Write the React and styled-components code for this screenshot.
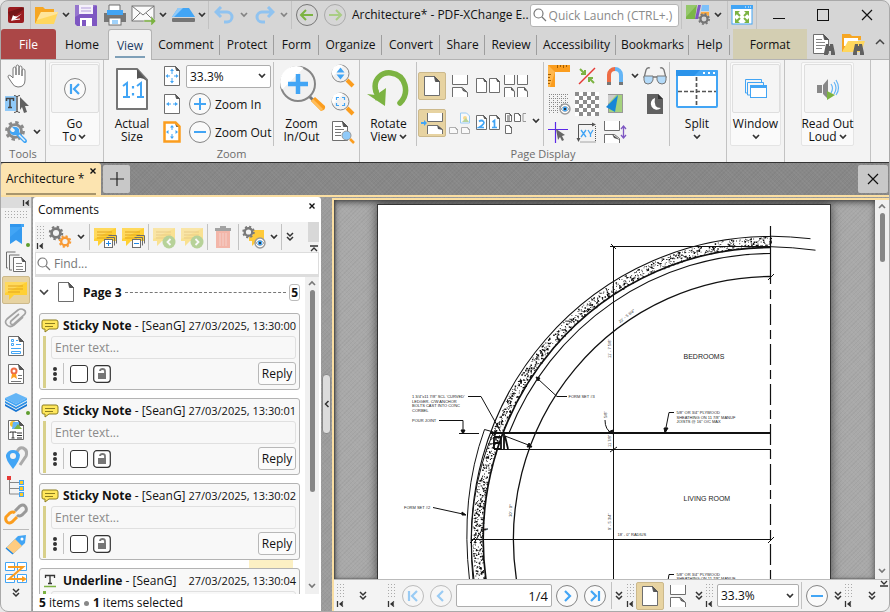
import React from "react";
import styled, { createGlobalStyle, css } from "styled-components";

const GlobalStyle = createGlobalStyle`
  * {
    box-sizing: border-box;
  }
  body {
    margin: 0;
    background: #e9e9e9;
    font-family: "Open Sans", "Noto Sans", sans-serif;
    font-size: 12px;
    line-height: 13px;
    color: #111;
  }
  button,
  input,
  select {
    font: inherit;
    color: inherit;
    margin: 0;
  }
`;

const weave = css`
  background-image: repeating-linear-gradient(
      45deg,
      rgba(255, 255, 255, 0.04) 0 1px,
      transparent 1px 3px
    ),
    repeating-linear-gradient(
      -45deg,
      rgba(0, 0, 0, 0.04) 0 1px,
      transparent 1px 3px
    );
`;

/* ---------- icons ---------- */

const G = "#6e6e6e";
const B = "#42a5f5";
const GREEN = "#7cb342";
const sheet = (x, y, w, h, f = 5) => (
  <>
    <path
      d={`M${x} ${y}h${w - f}l${f} ${f}v${h - f}h${-w}z`}
      fill="#fff"
      stroke={G}
    />
    <path d={`M${x + w - f} ${y}l${f} ${f}h${1 - f}z`} fill="#555" stroke="#555" />
  </>
);
const lens = (cx, cy, r, w) => (
  <>
    <circle cx={cx} cy={cy} r={r} fill="#f1f1f1" stroke="#858585" strokeWidth={w} />
    <path
      d={`M${cx - r + 1} ${cy + r / 3}L${cx + r / 3} ${cy - r + 1}A${r - 1} ${r - 1} 0 0 0 ${cx - r + 1} ${cy + r / 3}`}
      fill="#fff"
    />
  </>
);
const gear = (cx, cy, r, color) => (
  <>
    <circle cx={cx} cy={cy} r={r} fill="none" stroke={color} strokeWidth={r * 0.62} />
    <circle
      cx={cx}
      cy={cy}
      r={r * 1.42}
      fill="none"
      stroke={color}
      strokeWidth={r * 0.46}
      strokeDasharray={`${r * 0.557} ${r * 0.557}`}
    />
  </>
);
const note = (
  <>
    <path d="M1 3h22v13H10l-5 5v-5H1z" fill="#ffd034" />
    <path d="M1 3h22L1 14z" fill="#fff" opacity=".2" />
    <path d="M4 7h15M4 10h15M4 13h12" stroke="#e2a51f" />
  </>
);
const eye = (cx, cy) => (
  <>
    <circle cx={cx} cy={cy} r="5" fill="#fff" stroke="#999" strokeWidth="1.4" />
    <path d={`M${cx - 4} ${cy}q4 -5 8 0q-4 5 -8 0`} fill="#fff" stroke="#777" strokeWidth=".6" />
    <circle cx={cx} cy={cy} r="2.4" fill={B} />
    <circle cx={cx} cy={cy} r="1.1" fill="#222" />
  </>
);
const binoculars = (x, y) => (
  <path
    d={`M${x + 2} ${y}h3v2h1v-2h3l2 9v2h-4v-4h-3v4h-4v-2z`}
    fill="#616161"
  />
);
const stack = (x, y, sign) => (
  <>
    <path d={`M${x + 4} ${y}h8v8M${x + 2} ${y + 2}h8v8`} fill="none" stroke={G} />
    <rect x={x} y={y + 4} width="8" height="8" fill="#fff" stroke={G} />
    <path d={sign === "+" ? `M${x + 1.5} ${y + 8}h5M${x + 4} ${y + 5.5}v5` : `M${x + 1.5} ${y + 8}h5`} stroke="#1e88e5" />
  </>
);

const shapes = {
  chevron: [8, 8, <path d="M1 2l3 3 3-3" fill="none" stroke="#333" strokeWidth="1.7" />],
  chevronUp: [10, 8, <path d="M1 6l4-4 4 4" fill="none" stroke="#444" strokeWidth="1.5" />],
  chevronBig: [10, 8, <path d="M1 2l4 4 4-4" fill="none" stroke="#444" strokeWidth="1.7" />],
  scrollUp: [10, 8, <path d="M2 6l3-3 3 3" fill="none" stroke="#777" strokeWidth="1.6" />],
  scrollDown: [10, 8, <path d="M2 2l3 3 3-3" fill="none" stroke="#777" strokeWidth="1.6" />],
  chevronLeft: [6, 8, <path d="M4.500 1L1.500 4l3 3" fill="none" stroke="#333" strokeWidth="1.500" />],
  more: [8, 10, <path d="M1 1l3 3 3-3M1 5l3 3 3-3" fill="none" stroke="#333" strokeWidth="1.5" />],
  logo: [16, 16, (
    <>
      <rect width="16" height="16" rx="2" fill="#9a1c20" />
      <path d="M0 5L16 0V2L3 12z" fill="#5d1013" opacity=".6" />
      <path d="M14 3L6 9l3 .5 5-3-6 5-5 2.500L5 8l1 1z" fill="#fff" />
      <path d="M4 13l8-1" stroke="#fff" />
    </>
  )],
  folder: [24, 18, (
    <>
      <path d="M1 1h8l2 2h9v4H8L2 17H1z" fill="#f6a623" />
      <path d="M7 6h17l-4 12H1z" fill="#ffd75e" />
      <path d="M7 6h17l-1 2L3 14z" fill="#ffe59a" />
    </>
  )],
  save: [22, 22, (
    <>
      <path d="M0 1h21l1 1v20H2l-2-2z" fill="#7e57c2" />
      <path d="M0 1h22L0 13z" fill="#9575cd" />
      <rect x="4" y="1" width="14" height="9" fill="#f5f0fb" />
      <path d="M6 4h10M6 7h10" stroke="#b39ddb" />
      <rect x="5" y="14" width="12" height="8" fill="#fff" />
      <rect x="7" y="16" width="4" height="6" fill="#7e57c2" />
    </>
  )],
  printer: [22, 22, (
    <>
      <path d="M5 1h11v7H5z" fill="#fff" stroke={G} />
      <rect x="0" y="9" width="22" height="9" fill="#777" />
      <path d="M3 6h16v5H3z" fill={B} />
      <rect x="5" y="14" width="12" height="7" fill="#fff" stroke={G} />
      <path d="M8 17h6M8 19h6" stroke={B} />
    </>
  )],
  mail: [25, 20, (
    <>
      <rect x="1" y="1" width="22" height="15" fill="#fafafa" stroke="#777" />
      <path d="M1 1l11 9L23 1M1 16l8-8M23 16l-8-8" fill="none" stroke="#777" />
      <path d="M13 15h7v-4l5 5-5 5v-4h-7z" fill={GREEN} stroke="#d6d6d6" strokeWidth=".5" />
    </>
  )],
  scanner: [25, 16, (
    <>
      <path d="M7 1h11l6 9H1z" fill={B} />
      <path d="M7 1h5l-9 9H1z" fill="#90caf9" />
      <rect x="1" y="11" width="23" height="4" rx="1" fill="#757575" />
    </>
  )],
  undo: [22, 18, <path d="M7 1L2 6l5 5M2 6h11a5 5 0 0 1 0 10h-3" fill="none" stroke="#90c3f0" strokeWidth="3" />],
  redo: [22, 18, <path d="M15 1l5 5-5 5M20 6H9a5 5 0 0 0 0 10h3" fill="none" stroke="#90c3f0" strokeWidth="3" />],
  back: [24, 24, (
    <>
      <circle cx="12" cy="12" r="10.500" fill="none" stroke="#777" />
      <path d="M18 12H7M11 7l-5 5 5 5" fill="none" stroke={GREEN} strokeWidth="2" />
    </>
  )],
  forward: [24, 24, (
    <>
      <circle cx="12" cy="12" r="10.500" fill="none" stroke="#aaa" />
      <path d="M6 12h11M13 7l5 5-5 5" fill="none" stroke="#a9cd84" strokeWidth="2" />
    </>
  )],
  search: [14, 14, <path d="M9 9l4 4M10 5.500a4.500 4.500 0 1 1-9 0a4.500 4.500 0 0 1 9 0" fill="none" stroke="#777" strokeWidth="1.200" />],
  theme: [25, 22, (
    <>
      <path d="M0 1h11L9 15H0z" fill="#7bb648" />
      <path d="M0 1h11L0 13z" fill="#95c86b" />
      <path d="M12 1h3l-3 14H9z" fill="#7e57c2" />
      <path d="M16 1h7v6h-8z" fill="#7cc0fa" />
      <path d="M15 8h8v5l-9-1z" fill="#ffab40" />
      <circle cx="18" cy="15" r="5" fill="#d6d6d6" />
      {gear(18, 15, 3.6, "#757575")}
    </>
  )],
  fullscreen: [22, 20, (
    <>
      <rect x="1" y="1" width="20" height="18" fill="#fff" stroke={B} />
      <rect width="22" height="4" fill={B} />
      <path d="M14 2h1M17 2h1M19 2h1" stroke="#fff" />
      <path d="M4 6h5L4 11zM18 6h-5l5 5zM4 18h5l-5-5zM18 18h-5l5-5z" fill={GREEN} />
      <path d="M5 7l4 4M17 7l-4 4M5 17l4-4M17 17l-4-4" stroke={GREEN} strokeWidth="2" />
    </>
  )],
  minimize: [12, 12, <path d="M0 9.500h12" stroke="#111" />],
  maximize: [12, 12, <rect x=".5" y=".5" width="11" height="11" fill="none" stroke="#111" />],
  close: [12, 12, <path d="M1 1l10 10M11 1L1 11" stroke="#111" strokeWidth="1.200" />],
  closeSmall: [8, 8, <path d="M1.500 1.500l5 5M6.500 1.500l-5 5" stroke="#111" strokeWidth="1.400" />],
  plus: [16, 16, <path d="M8 1v14M1 8h14" stroke="#222" strokeWidth="1.200" />],
  findDoc: [24, 22, (
    <>
      {sheet(1.500, 1.500, 15, 19)}
      <path d="M4 6.500h6M4 9.500h9M4 12.500h9M4 15.500h6" stroke="#888" />
      {binoculars(12, 11)}
    </>
  )],
  findFolder: [24, 22, (
    <>
      <path d="M1 1h8l2 2h9v4H8L2 19H1z" fill="#f6a623" />
      <path d="M3 5h14v8H3z" fill="#fff" />
      <path d="M7 8h17l-4 11H1z" fill="#ffd75e" />
      {binoculars(12, 11)}
    </>
  )],
  hand: [20, 24, (
    <path
      d="M6 14V5q0-2 1.500-2T9 5v6V3q0-2 1.500-2T12 3v8V4q0-2 1.500-2T15 4v8V7q0-2 1.500-2T18 7v9q0 7-7 7-4 0-6-4l-4-6q0-3 3-1z"
      fill="#fff"
      stroke="#777"
    />
  )],
  selectText: [25, 22, (
    <>
      <rect x="0" y="3" width="11" height="15" fill="#90caf9" />
      <path d="M1.500 8V5.500h7V8M5 5.500v9M3 14.500h4" stroke="#444" fill="none" strokeWidth="1.500" />
      <path d="M9 2.500q3 0 3 2v13q0 2-3 2M15 2.500q-3 0-3 2v13q0 2 3 2" fill="none" stroke="#555" />
      <path d="M15 4l9 9h-4l2 6-3 1-2-6-2 3z" fill="#616161" />
    </>
  )],
  gearWrench: [23, 23, (
    <>
      {gear(10, 10, 6, "#8a8a8a")}
      <circle cx="10" cy="10" r="5" fill="#f3f3f3" />
      <path d="M13 13l7 7" stroke={B} strokeWidth="4" strokeLinecap="round" />
      <path d="M7 6l3 3-1 2-2 0-2-2q-1 4 3 5 3 1 5-1t1-5q-2-3-7-2" fill={B} />
      <path d="M14 14l6 6" stroke="#e3f2fd" strokeWidth="1.500" />
    </>
  )],
  first: [24, 24, (
    <>
      <circle cx="12" cy="12" r="10.500" fill="#fafafa" stroke="#858585" />
      <path d="M8 7v10M16 7l-5 5 5 5" fill="none" stroke={B} strokeWidth="2.200" />
    </>
  )],
  prev: [24, 24, (
    <>
      <circle cx="12" cy="12" r="10.500" fill="#fafafa" stroke="#858585" />
      <path d="M14 7l-5 5 5 5" fill="none" stroke={B} strokeWidth="2.200" />
    </>
  )],
  next: [24, 24, (
    <>
      <circle cx="12" cy="12" r="10.500" fill="#fafafa" stroke="#858585" />
      <path d="M10 7l5 5-5 5" fill="none" stroke={B} strokeWidth="2.200" />
    </>
  )],
  last: [24, 24, (
    <>
      <circle cx="12" cy="12" r="10.500" fill="#fafafa" stroke="#858585" />
      <path d="M16 7v10M8 7l5 5-5 5" fill="none" stroke={B} strokeWidth="2.200" />
    </>
  )],
  zoomIn: [24, 24, (
    <>
      <circle cx="12" cy="12" r="10.500" fill="#fafafa" stroke="#858585" />
      <path d="M6 12h12M12 6v12" stroke={B} strokeWidth="2" />
    </>
  )],
  zoomOut: [24, 24, (
    <>
      <circle cx="12" cy="12" r="10.500" fill="#fafafa" stroke="#858585" />
      <path d="M6 12h12" stroke={B} strokeWidth="2" />
    </>
  )],
  actual: [36, 44, (
    <>
      <path d="M3 2h20l10 11v29H3z" fill="#fff" stroke="#757575" strokeWidth="2" strokeLinejoin="round" />
      <path d="M23 2l10 12q-6-5-10-2z" fill="#555" />
      <path d="M9 19l4-3v14M9 30h7M23 19l4-3v14M23 30h7" fill="none" stroke={B} strokeWidth="2" />
      <path d="M19 19v2.500M19 26v2.500" stroke={B} strokeWidth="2.200" />
    </>
  )],
  fitPage: [18, 22, (
    <>
      {sheet(1.5, 1.5, 15, 19, 4)}
      <path d="M9 3.500l2 2.500H7zM9 18.500l2-2.500H7zM2.500 11l2.500-2v4zM15.500 11L13 9v4z" fill={B} />
      <path d="M9 6v3M9 13v3M5 11h2M11 11h2" stroke={B} />
    </>
  )],
  fitWidth: [18, 22, (
    <>
      {sheet(1.5, 1.5, 15, 19, 4)}
      <path d="M3 11l3-2v4zM15 11l-3-2v4z" fill={B} />
      <path d="M6 11h2M10 11h2" stroke={B} />
    </>
  )],
  fitVisible: [18, 22, (
    <>
      {sheet(1.500, 1.5, 15, 19, 4)}
      <path d="M1.500 1.500h11l4 4v15h-15z" fill="none" stroke="#fb9d1e" strokeWidth="2.500" />
      <path d="M9 4l2 2.500H7zM9 18l2-2.500H7zM3 11l2.500-2v4zM15 11l-2.500-2v4z" fill={B} />
      <path d="M9 6v3M9 13v3" stroke={B} />
    </>
  )],
  magnifier: [48, 48, (
    <>
      <path d="M31 31l5 5" stroke="#777" strokeWidth="3" />
      <path d="M33 36l4-4 10 9q1 4-4 5z" fill="#fb9d1e" />
      <path d="M33 36l2-2 10 10-2 2z" fill="#ffbd59" />
      {lens(20, 19, 17, 2)}
      <path d="M20 9v20M10 19h20" stroke={B} strokeWidth="4.500" />
    </>
  )],
  zoomDynamic: [24, 24, (
    <>
      <path d="M16 16l6 6" stroke="#fb9d1e" strokeWidth="4" />
      {lens(9.500, 9.500, 8.500, 1)}
      <path d="M9.500 3.500l4 5h-8zM9.500 15.500l4-5h-8z" fill={B} />
    </>
  )],
  zoomArea: [24, 24, (
    <>
      <path d="M16 16l6 6" stroke="#fb9d1e" strokeWidth="4" />
      {lens(9.500, 9.500, 8.500, 1)}
      <path d="M5.500 8V5.500H8M11 5.500h2.500V8M5.500 11v2.500H8M11 13.500h2.500V11" fill="none" stroke={B} strokeWidth="1.200" />
    </>
  )],
  zoomLoupe: [24, 24, (
    <>
      {sheet(1.500, 1.500, 15, 19)}
      <path d="M4 6.500h6M4 9.500h9M4 12.500h6M4 15.500h6" stroke="#777" />
      <path d="M19 19l4 4" stroke="#fb9d1e" strokeWidth="2.500" />
      <circle cx="15.500" cy="15.500" r="4.500" fill="#90caf9" stroke="#999" />
    </>
  )],
  rotate: [46, 38, (
    <>
      <path d="M10 22C6 8 17 2 25 3c15 2 19 20 9 30" fill="none" stroke={GREEN} strokeWidth="5.500" strokeLinecap="round" />
      <path d="M1 24l9 1 10-7-1 18z" fill={GREEN} />
      <path d="M10 20l2 10" stroke={GREEN} strokeWidth="5" />
    </>
  )],
  pageSingle: [18, 22, sheet(1.500, 1.500, 15, 19)],
  pageCont: [18, 22, (
    <>
      <path d="M1.500 0v9.500h15V0" fill="#fff" stroke={G} />
      <path d="M1.500 22V12.500h10l5 5V22" fill="#fff" stroke={G} />
      <path d="M10 12l7 6-5-2z" fill="#555" />
    </>
  )],
  pageTwo: [26, 18, (
    <>
      {sheet(1.500, 1.500, 10, 14, 3)}
      {sheet(14.500, 1.500, 10, 14, 3)}
    </>
  )],
  pageFour: [26, 22, (
    <>
      <path d="M1.500 0v9.500h10V0M14.500 0v9.500h10V0M1.500 22v-9.500h7l3 4V22M14.500 22v-9.500h7l3 4V22" fill="#fff" stroke={G} />
      <path d="M8 12l4 5-4-2zM21 12l4 5-4-2z" fill="#555" />
    </>
  )],
  pageLoop: [24, 22, (
    <>
      <path d="M7.500 1v8.500h15V1M7.500 22v-8.500h10l5 4V22" fill="#fff" stroke={G} />
      <path d="M17 13l6 5-5-1z" fill="#555" />
      <path d="M1 11h3" stroke={B} strokeWidth="2" />
      <path d="M4 8l3 3-3 3z" fill={B} />
    </>
  )],
  pageCover: [24, 22, (
    <g opacity=".5">
      <path d="M12.500 1h6l3 3v7h-9z" fill="#fff" stroke={B} />
      <circle cx="17" cy="6" r="2" fill="#fbc02d" />
      <path d="M14 10l4-4 3 4z" fill={GREEN} />
      {sheet(1.500, 15.500, 8, 6, 2)}
      {sheet(13.500, 15.500, 8, 6, 2)}
    </g>
  )],
  pageRtl: [26, 18, (
    <>
      {sheet(1.500, 1.500, 10, 14, 3)}
      {sheet(14.500, 1.500, 10, 14, 3)}
      <path d="M4 7.500q2.500-2 4.500 0T4 13.500h5M17.500 8l2-1.500v7M17 13.500h5" fill="none" stroke={B} strokeWidth="1.700" />
    </>
  )],
  pageThumbs: [24, 22, (
    <>
      {sheet(1.500, 1.500, 6, 8, 2)}
      <path d="M3 4h3M3 6h3M3 8h3" stroke="#555" />
      {sheet(10.500, 1.500, 6, 8, 2)}
      <path d="M22 1.500h-3v8h3" fill="none" stroke="#999" />
      {sheet(1.500, 13.500, 6, 8, 2)}
    </>
  )],
  ruler: [24, 24, (
    <>
      <path d="M1 1h22v7H8v15H1z" fill="#fb9d1e" />
      <path d="M8 8L1 1v22h2z" fill="#ffb74d" />
      <path d="M10.500 1v3M13.500 1v2M16.500 1v3M19.500 1v2M1 10.500h3M1 13.500h2M1 16.500h3M1 19.500h2" stroke="#a35e00" />
    </>
  )],
  snapLine: [24, 24, (
    <>
      <path d="M4 20L20 4" stroke="#e53935" strokeWidth="1.500" />
      <path d="M5 5l5 5M10 6v4H6M19 19l-5-5M14 18v-4h4" fill="none" stroke={GREEN} strokeWidth="2" />
    </>
  )],
  magnet: [20, 22, (
    <>
      <path d="M4 19V10a6 6 0 0 1 6-6" fill="none" stroke="#ee6c45" strokeWidth="4" />
      <path d="M10 4a6 6 0 0 1 6 6v9" fill="none" stroke="#64b5f6" strokeWidth="4" />
      <path d="M2 18.500h4M14 18.500h4" stroke="#777" strokeWidth="3" />
    </>
  )],
  glasses: [26, 20, (
    <>
      <path d="M2 12L4 4q1-3 4-2M24 12L22 4q-1-3-4-2M11 11h4" fill="none" stroke="#777" strokeWidth="1.300" />
      <path d="M2 10h9v4q-1 4-5 4t-4-4zM15 10h9v4q0 4-4 4t-5-4z" fill="#b3daf9" stroke="#777" />
    </>
  )],
  gridEye: [24, 24, (
    <>
      <path d="M2 2.500h19M2 6.500h19M2 10.500h19M2 14.500h19M2 18.500h10M2.500 2v19M6.500 2v19M10.500 2v19M14.500 2v12M18.500 2v10" stroke="#888" strokeDasharray="1 1" />
      {eye(18, 17)}
    </>
  )],
  checker: [24, 24, (
    <>
      <rect width="24" height="24" fill="#fff" />
      <path
        d="M0 2h24M0 10h24M0 18h24"
        stroke="#8c8c8c"
        strokeWidth="4"
        strokeDasharray="4 4"
      />
      <path
        d="M4 6h20M4 14h20M4 22h20"
        stroke="#8c8c8c"
        strokeWidth="4"
        strokeDasharray="4 4"
      />
    </>
  )],
  openPage: [20, 22, (
    <>
      <rect x="3.500" y="1.500" width="14" height="18" fill="#a5d27e" stroke="#999" />
      <path d="M13 2L1 14l9 5z" fill="#1787d8" />
      <path d="M3 2h8l-8 9z" fill="#ccc" />
    </>
  )],
  moon: [18, 22, (
    <>
      <path d="M1 1h11l5 5v15H1z" fill="#616161" />
      <path d="M12 1l5 5h-5z" fill="#333" />
      <path d="M9 5a6 6 0 1 0 6 10q-8 0-6-10" fill="#fff" />
    </>
  )],
  cross: [24, 24, (
    <>
      <path d="M1 9.500h20M8.500 2v21" stroke="#5b28e8" strokeWidth="1.200" />
      <path d="M9 9l9 6-3 1 2 4-2 1-2-4-2 3z" fill="#666" />
    </>
  )],
  xy: [24, 24, (
    <>
      <path d="M3.500 20V4.500h14" fill="none" stroke="#555" />
      <path d="M3.500 22l-2-4h4zM21 4.500l-4-2v4z" fill="#555" />
      <path d="M20.500 6v16H5" fill="none" stroke="#555" strokeDasharray="1 1" />
      <path d="M6 10l5 7M11 10l-5 7M13 10l2.500 4L18 10M15.500 14v3" fill="none" stroke={B} strokeWidth="1.300" />
    </>
  )],
  spacing: [24, 24, (
    <>
      <path d="M1.500 1v9.500h15V1M1.500 23v-8.500h10l5 4V23" fill="#fff" stroke={G} />
      <path d="M9 14l8 6-6-2z" fill="#555" />
      <path d="M20.500 7v10M18 9l2.500-3L23 9M18 15l2.500 3 2.500-3" fill="none" stroke="#7e57c2" strokeWidth="1.300" />
    </>
  )],
  split: [42, 38, (
    <>
      <rect x="1" y="1" width="40" height="36" rx="1" fill="#fff" stroke={B} strokeWidth="2" />
      <path d="M0 1q0-1 1-1h40q1 0 1 1v5H0z" fill={B} />
      <path d="M0 0h24l-6 6H0z" fill="#2b93ea" />
      <path d="M27 3h2M32 3h2M37 3h2" stroke="#fff" strokeWidth="2" />
      <path d="M20.500 7v29M2 21.500h38" stroke="#555" strokeWidth="1.700" strokeDasharray="4 2" />
    </>
  )],
  windows: [24, 22, (
    <>
      <path d="M3 15H1.500V1.500h16V4M6 17H3.500V4.500h16V7" fill="none" stroke={B} />
      <rect x="6.500" y="7.500" width="16" height="12" fill="#fff" stroke={B} />
      <path d="M6 7h17v3H6z" fill={B} />
    </>
  )],
  speaker: [24, 24, (
    <>
      <path d="M1 8h5v8H1zM7 8l5-6v20l-5-5z" fill="#888" />
      <path d="M15 7q3 4 0 9M18 5q4 6 0 12M20 3q5 8 0 15" fill="none" stroke="#64b5f6" strokeWidth="1.200" />
      <path d="M11 14l8 4-8 5z" fill={GREEN} />
    </>
  )],
  dock: [8, 8, <path d="M1.500 1v6M7 1.500L4 4l3 2.500M4 4h3" fill="none" stroke="#333" strokeWidth="1.300" />],
  collapse: [8, 7, <path d="M0 1h8M1 6l3-3 3 3" fill="none" stroke="#333" strokeWidth="1.300" />],
  expand: [8, 7, <path d="M0 6h8M1 1l3 3 3-3" fill="none" stroke="#333" strokeWidth="1.300" />],
  bookmark: [18, 22, (
    <>
      <path d="M3 1h14v3h-2v17l-6-4-6 4z" fill={B} />
      <path d="M3 1h11v3H3z" fill="#1e88e5" opacity=".5" />
      <path d="M3 14L15 4v17l-6-4-6 4z" fill="#1e88e5" opacity=".35" />
    </>
  )],
  pages: [22, 22, (
    <>
      <path d="M3 17H1.500v-16h9M7 19H4.500V4h10" fill="none" stroke={G} />
      {sheet(8.500, 6.500, 12, 14, 4)}
      <path d="M11 12.500h6M11 15.500h7M11 18.500h7" stroke="#888" />
    </>
  )],
  note: [24, 22, note],
  clip: [24, 22, <path d="M19 10l-9 8q-4 3-7 0t0-6L14 3q3-2 6 0t0 5l-10 9q-2 1-3 0t0-3l8-7" fill="none" stroke="#a3a3a3" strokeWidth="1.700" />],
  fields: [18, 22, (
    <>
      {sheet(1.500, 1.500, 15, 19)}
      <path d="M4.500 4.500h2v2h-2zM4.500 8.500h2v2h-2zM4.500 16.500h9v2h-9z" fill="none" stroke={B} />
      <path d="M9 5.500h2M9 9.500h5M4 13.500h10" stroke={B} />
    </>
  )],
  cert: [18, 22, (
    <>
      {sheet(1.500, 1.500, 15, 19)}
      <circle cx="7" cy="8" r="2.500" fill="none" stroke="#ee6c45" strokeWidth="2" />
      <path d="M5 11l-1 5 3-2 3 2-1-5" fill="#fb9d1e" />
      <path d="M11 12.500h4M11 15.500h4M4 18.500h10" stroke="#777" />
    </>
  )],
  layers: [24, 22, (
    <>
      <path d="M1 13l11 6 11-6v2l-11 6-11-6z" fill="#1976d2" />
      <path d="M1 10l11 6 11-6v2l-11 6-11-6z" fill="#2b8fe6" />
      <path d="M1 7l11-5 11 5-11 6z" fill="#64b5f6" />
      <path d="M1 7l11 6 11-6v2l-11 6-11-6z" fill="#42a5f5" />
    </>
  )],
  content: [18, 22, (
    <>
      {sheet(1.500, 1.500, 15, 19)}
      <circle cx="6" cy="5" r="3" fill="#fbc02d" />
      <path d="M6 3h6v7H5z" fill="#64b5f6" />
      <path d="M7 10l4-5 4 5z" fill={GREEN} />
      <path d="M3 14v-1h6v1M6 13v6M4.500 19h3M10 14h5M10 16.500h5M10 19h5" fill="none" stroke="#333" />
    </>
  )],
  places: [24, 24, (
    <>
      <path d="M13 6q2-5 6-4 5 2 3 8l-6 9" fill="none" stroke="#aaa" strokeWidth="3" />
      <path d="M9 23Q1 13 2 9q2-5 7-5t7 5q0 5-7 14" fill="#42a5f5" />
      <circle cx="9" cy="10" r="3" fill="#f3f3f3" />
    </>
  )],
  tree: [22, 22, (
    <>
      <path d="M4.500 4v15h10M5 7.500h10M5 13.500h10" fill="none" stroke="#888" />
      <rect x="2" y="1" width="4" height="4" fill="#e53935" />
      <rect x="14.500" y="5.500" width="4" height="4" fill="#ffca28" stroke={B} />
      <rect x="14.500" y="11.500" width="4" height="4" fill="#ffca28" stroke={B} />
      <rect x="14.500" y="17.500" width="4" height="4" fill="#ffca28" stroke={B} />
    </>
  )],
  link: [24, 24, (
    <>
      <path d="M11 9l5-5q3-2 5 0t1 5l-4 4q-3 2-5 0" fill="none" stroke="#999" strokeWidth="3" />
      <path d="M13 15l-5 5q-3 2-5 0t-1-5l4-4q3-2 5 0" fill="none" stroke="#fb9d1e" strokeWidth="3" />
    </>
  )],
  tag: [24, 24, (
    <>
      <path d="M2 15L14 3l8-1-1 8L9 21z" fill="#42a5f5" />
      <path d="M2 15l9-9 7 7-9 8z" fill="#ffcc80" />
      <circle cx="18" cy="6" r="1.500" fill="#fff" />
      <path d="M2 15l7 6" stroke="#1e88e5" strokeWidth="1.500" />
    </>
  )],
  order: [24, 24, (
    <>
      <path d="M1.500 1.500h9v8h-9zM13.500 1.500h9v8h-9zM1.500 13.500h9v8h-9zM13.500 13.500h9v8h-9z" fill="#fff" stroke={B} />
      <path d="M4 6h15L5 18h14" fill="none" stroke="#fb9d1e" strokeWidth="2" />
      <path d="M18 15l5 3-5 3z" fill="#fb9d1e" />
    </>
  )],
  gears: [24, 24, (
    <>
      {gear(8, 8, 4.400, "#7a7a7a")}
      {gear(17, 16.500, 3.800, "#f89a35")}
    </>
  )],
  noteExpand: [24, 24, <>{note}{stack(11.500, 10.500, "+")}</>],
  noteCollapse: [24, 24, <>{note}{stack(11.500, 10.500, "-")}</>],
  notePrev: [24, 24, (
    <>
      {note}
      <circle cx="17" cy="17" r="6.500" fill={GREEN} />
      <path d="M18.500 14l-3 3 3 3" fill="none" stroke="#fff" strokeWidth="1.800" />
    </>
  )],
  noteNext: [24, 24, (
    <>
      {note}
      <circle cx="17" cy="17" r="6.500" fill={GREEN} />
      <path d="M15.500 14l3 3-3 3" fill="none" stroke="#fff" strokeWidth="1.800" />
    </>
  )],
  trash: [18, 24, (
    <>
      <path d="M2 6h14v17H2z" fill="#f47a62" />
      <path d="M6 8v13M9 8v13M12 8v13" stroke="#f8b3a5" />
      <path d="M1 3h16v3H1zM6 1h6v2H6z" fill="#555" />
    </>
  )],
  noteView: [24, 24, (
    <>
      <path d="M7 5h15v11h-7l-5 5v-5H7z" fill="#ffca3a" />
      <circle cx="6.500" cy="7" r="5" fill="#f3f3f3" />
      {gear(6.500, 7, 3.800, "#7a7a7a")}
      {eye(18, 18)}
    </>
  )],
  sticky: [18, 14, (
    <>
      <path d="M2 1h13q2 0 2 2v5q0 2-2 2h-7l-4 3v-3H2Q1 10 1 8V3q0-2 1-2z" fill="#ffe75c" stroke="#8b7d1f" />
      <path d="M4 4.500h10M4 7.500h8" stroke="#8b7d1f" />
    </>
  )],
  underline: [12, 14, (
    <>
      <path d="M1.500 4V1.500h9V4M6 1.500v8M4 9.500h4" fill="none" stroke="#333" strokeWidth="1.300" />
      <path d="M0 12.500h12" stroke={GREEN} strokeWidth="1.500" />
    </>
  )],
  dots: [4, 16, (
    <g fill="#333">
      <circle cx="2" cy="3" r="2" />
      <circle cx="2" cy="8" r="2" />
      <circle cx="2" cy="13" r="2" />
    </g>
  )],
  lock: [18, 18, (
    <>
      <rect x=".700" y=".700" width="16.600" height="16.600" rx="3" fill="#fff" stroke="#333" strokeWidth="1.200" />
      <path d="M5 8h8v6H5z" fill="#777" />
      <path d="M7 6q0-2 2.500-2T12 6v3" fill="none" stroke="#777" strokeWidth="1.800" />
    </>
  )],
};

const Svg = styled.svg`
  display: block;
  flex: none;
  opacity: ${(p) => (p.$faded ? 0.5 : 1)};
`;

const Icon = ({ name, faded }) => {
  const [w, h, body] = shapes[name];
  return (
    <Svg width={w} height={h} viewBox={`0 0 ${w} ${h}`} $faded={faded} aria-hidden="true">
      {body}
    </Svg>
  );
};

/* ---------- shared parts ---------- */

const ToolButton = styled.button`
  display: flex;
  align-items: center;
  justify-content: center;
  flex: none;
  width: ${(p) => p.$w || 28}px;
  height: ${(p) => p.$h || 28}px;
  padding: 0;
  border: 1px solid ${(p) => (p.$active ? "#ccb98c" : "transparent")};
  border-radius: 2px;
  background: ${(p) => (p.$active ? "#e7d3a1" : "transparent")};
`;

const Tool = ({ icon, label, w, h, active, faded }) => (
  <ToolButton $w={w} $h={h} $active={active} aria-label={label || icon}>
    <Icon name={icon} faded={faded} />
  </ToolButton>
);

const Rule = styled.span`
  flex: none;
  align-self: stretch;
  width: 1px;
  margin: ${(p) => p.$m || "0"};
  background: #c2c2c2;
`;

const Grip = styled.span`
  display: flex;
  flex-direction: column;
  align-items: flex-start;
  justify-content: space-between;
  flex: none;
  width: 10px;
  height: 25px;
  &::before {
    content: "";
    width: 10px;
    height: 14px;
    background: radial-gradient(#aaa 0.8px, transparent 1px) 0 0 / 3px 3px;
  }
`;

const SelectBox = styled.span`
  display: flex;
  align-items: center;
  flex: none;
  width: ${(p) => p.$w}px;
  height: 23px;
  padding-right: 4px;
  border: 1px solid #adadad;
  border-radius: 2px;
  background: #fff;
  select {
    flex: 1;
    min-width: 0;
    padding: 0 3px;
    border: 0;
    outline: 0;
    appearance: none;
    background: transparent;
  }
`;

const ZoomSelect = ({ w, label }) => (
  <SelectBox $w={w}>
    <select aria-label={label} defaultValue="33.3%">
      <option>33.3%</option>
      <option>50%</option>
      <option>100%</option>
    </select>
    <Icon name="chevron" />
  </SelectBox>
);

/* ---------- window frame ---------- */

const Window = styled.div`
  display: flex;
  flex-direction: column;
  height: 100vh;
  border: 1px solid #a9a9a9;
  border-radius: 8px;
  overflow: hidden;
  background: #d6d6d6;
`;

const TitleBar = styled.header`
  display: flex;
  align-items: center;
  flex: none;
  height: 28px;
`;

const WindowTitle = styled.h1`
  flex: none;
  margin: 0 1px 0 3px;
  font-size: 12px;
  font-weight: 400;
  line-height: 16px;
  white-space: nowrap;
`;

const Launch = styled.label`
  display: flex;
  align-items: center;
  gap: 2px;
  flex: 1;
  height: 23px;
  min-width: 0;
  padding: 0 2px;
  border: 1px solid #b5b5b5;
  border-radius: 3px;
  background: #fff;
  input {
    flex: 1;
    min-width: 0;
    padding: 0;
    border: 0;
    outline: 0;
    background: transparent;
  }
  input::placeholder {
    color: #8a8a8a;
  }
`;

const TabRow = styled.nav`
  display: flex;
  align-items: stretch;
  flex: none;
  height: 31px;
  border-bottom: 1px solid #b3b3b3;
`;

const Tab = styled.button`
  position: relative;
  flex: none;
  width: ${(p) => p.$w}px;
  padding: 0;
  border: 0;
  background: transparent;
  white-space: nowrap;
  ${(p) =>
    p.$rule &&
    css`
      &::after {
        content: "";
        position: absolute;
        right: 0;
        top: 6px;
        bottom: 4px;
        width: 1px;
        background: #9e9e9e;
      }
    `}
  ${(p) =>
    p.$kind === "file" &&
    css`
      background: #ab4747;
      color: #fff;
      border-radius: 3px 3px 0 0;
    `}
  ${(p) =>
    p.$kind === "view" &&
    css`
      margin-bottom: -1px;
      border: 1px solid #b3b3b3;
      border-bottom: 0;
      border-radius: 3px 3px 0 0;
      background: #f3f3f3;
      color: #1f3f66;
      &::after {
        content: "";
        position: absolute;
        left: 6px;
        right: 6px;
        bottom: 2px;
        height: 2px;
        background: #7fa0b8;
      }
    `}
  ${(p) =>
    p.$kind === "format" &&
    css`
      margin-left: 3px;
      background: #d3ceb2;
    `}
`;

const tabs = [
  { text: "File", w: 55, kind: "file" },
  { text: "Home", w: 52 },
  { text: "View", w: 44, kind: "view" },
  { text: "Comment", w: 68, rule: true },
  { text: "Protect", w: 54, rule: true },
  { text: "Form", w: 45, rule: true },
  { text: "Organize", w: 63, rule: true },
  { text: "Convert", w: 58, rule: true },
  { text: "Share", w: 45, rule: true },
  { text: "Review", w: 52, rule: true },
  { text: "Accessibility", w: 79, rule: true },
  { text: "Bookmarks", w: 73, rule: true },
  { text: "Help", w: 41, rule: true },
  { text: "Format", w: 74, kind: "format" },
];

const Spacer = styled.span`
  flex: 1;
`;

const Title = () => (
  <TitleBar>
    <Tool icon="logo" label="Menu" w={29} />
    <Rule />
    <Tool icon="folder" label="Open" w={30} />
    <Tool icon="chevron" label="Open menu" w={10} />
    <Tool icon="save" label="Save" w={30} />
    <Tool icon="printer" label="Print" />
    <Tool icon="mail" label="Mail" />
    <Tool icon="chevron" label="Mail menu" w={12} />
    <Tool icon="scanner" label="Scan" />
    <Tool icon="chevron" label="Scan menu" w={10} />
    <Rule $m="0 2px 0 1px" />
    <Tool icon="undo" label="Undo" />
    <Tool icon="chevron" label="Undo menu" w={10} faded />
    <Tool icon="redo" label="Redo" w={30} />
    <Tool icon="chevron" label="Redo menu" w={10} faded />
    <Rule $m="0 1px 0 2px" />
    <Tool icon="back" label="Back" />
    <Tool icon="forward" label="Forward" />
    <WindowTitle>Architecture* - PDF-XChange E..</WindowTitle>
    <Launch>
      <Icon name="search" />
      <input aria-label="Quick launch" placeholder="Quick Launch (CTRL+.)" />
    </Launch>
    <Rule $m="0 2px" />
    <Tool icon="theme" label="Theme" />
    <Tool icon="chevron" label="Theme menu" w={12} />
    <Rule $m="0 0 0 3px" />
    <Tool icon="fullscreen" label="Full screen" />
    <Rule />
    <Tool icon="minimize" label="Minimize" w={44} />
    <Tool icon="maximize" label="Maximize" w={44} />
    <Tool icon="close" label="Close" w={44} />
  </TitleBar>
);

const Tabs = () => (
  <TabRow>
    {tabs.map((t) => (
      <Tab key={t.text} $w={t.w} $kind={t.kind} $rule={t.rule}>
        {t.text}
      </Tab>
    ))}
    <Blank />
    <Tool icon="findDoc" label="Find" w={34} h={30} />
    <Tool icon="findFolder" label="Search" w={24} h={30} />
    <Spacer />
    <Tool icon="chevronUp" label="Collapse ribbon" w={18} h={26} />
  </TabRow>
);

/* ---------- ribbon ---------- */

const RibbonBar = styled.section`
  display: flex;
  flex: none;
  height: 102px;
  background: #f3f3f3;
`;

const Group = styled.div`
  display: flex;
  flex-direction: column;
  flex: none;
  width: ${(p) => p.$w}px;
  padding-top: 2px;
  border-right: 1px solid #c2c2c2;
`;

const GroupBody = styled.div`
  display: flex;
  height: 84px;
  justify-content: center;
`;

const GroupName = styled.div`
  line-height: 15px;
  font-size: 11px;
  text-align: center;
  color: #6b6b6b;
`;

const Column = styled.div`
  display: flex;
  flex-direction: column;
  flex: none;
  width: ${(p) => p.$w}px;
`;

const Line = styled.div`
  display: flex;
  align-items: center;
  height: 28px;
`;

const TextButton = styled.button`
  display: flex;
  align-items: center;
  gap: 3px;
  height: 28px;
  padding: 0 2px;
  border: 0;
  background: transparent;
  white-space: nowrap;
`;

const BigButton = styled.button`
  display: flex;
  flex-direction: column;
  align-items: center;
  flex: none;
  width: ${(p) => p.$w}px;
  padding: 1px 0 0;
  border: 1px solid ${(p) => (p.$boxed ? "#e4e4e4" : "transparent")};
  border-radius: 2px;
  background: ${(p) => (p.$boxed ? "#fafafa" : "transparent")};
`;

const BigIcon = styled.span`
  display: flex;
  align-items: center;
  justify-content: center;
  width: ${(p) => (p.$boxed ? "48px" : "100%")};
  height: 49px;
  margin-bottom: 4px;
  ${(p) =>
    p.$boxed &&
    css`
      border: 1px solid #dedede;
      border-radius: 2px;
      background: #f5f5f5;
    `}
`;

const BigText = styled.span`
  display: flex;
  align-items: center;
  gap: 2px;
  height: 13px;
  white-space: nowrap;
`;

const Big = ({ icon, lines, w, boxed, menu }) => (
  <BigButton $w={w} $boxed={boxed}>
    <BigIcon $boxed={boxed}>
      <Icon name={icon} />
    </BigIcon>
    {lines.map((t, i) => (
      <BigText key={i}>
        {t}
        {menu && i === lines.length - 1 && <Icon name="chevron" />}
      </BigText>
    ))}
  </BigButton>
);

const PageGrid = styled.div`
  display: grid;
  grid-template-columns: repeat(4, 28px);
  row-gap: 9px;
  align-content: center;
  padding-left: 1px;
`;

const ViewGrid = styled.div`
  display: grid;
  grid-template-columns: 28px 28px 28px 12px 28px;
  grid-template-rows: repeat(3, 28px);
  padding-left: 1px;
`;

const Blank = styled.span``;

const Ribbon = () => (
  <RibbonBar>
    <Group $w={45}>
      <GroupBody>
        <Column $w={44}>
          <Line>
            <Tool icon="hand" label="Hand" w={32} />
          </Line>
          <Line>
            <Tool icon="selectText" label="Select text" w={32} />
          </Line>
          <Line>
            <Tool icon="gearWrench" label="Other tools" w={30} />
            <Tool icon="chevron" label="Tools menu" w={12} />
          </Line>
        </Column>
      </GroupBody>
      <GroupName>Tools</GroupName>
    </Group>

    <Group $w={58}>
      <GroupBody>
        <Big icon="first" lines={["Go", "To"]} w={51} boxed menu />
      </GroupBody>
    </Group>

    <Group $w={256}>
      <GroupBody>
        <Big icon="actual" lines={["Actual", "Size"]} w={52} />
        <Column $w={28}>
          <Tool icon="fitPage" label="Fit page" />
          <Tool icon="fitWidth" label="Fit width" />
          <Tool icon="fitVisible" label="Fit visible" />
        </Column>
        <Column $w={87}>
          <Line>
            <ZoomSelect w={85} label="Zoom level" />
          </Line>
          <TextButton>
            <Icon name="zoomIn" />
            Zoom In
          </TextButton>
          <TextButton>
            <Icon name="zoomOut" />
            Zoom Out
          </TextButton>
        </Column>
        <Rule />
        <Big icon="magnifier" lines={["Zoom", "In/Out"]} w={55} />
        <Column $w={28}>
          <Tool icon="zoomDynamic" label="Dynamic zoom" />
          <Tool icon="zoomArea" label="Marquee zoom" />
          <Tool icon="zoomLoupe" label="Loupe" />
        </Column>
      </GroupBody>
      <GroupName>Zoom</GroupName>
    </Group>

    <Group $w={367}>
      <GroupBody>
        <Big icon="rotate" lines={["Rotate", "View"]} w={54} menu />
        <Rule />
        <PageGrid>
          <Tool icon="pageSingle" label="Single page" active />
          <Tool icon="pageCont" label="Continuous" />
          <Tool icon="pageTwo" label="Two pages" />
          <Tool icon="pageFour" label="Two continuous" />
          <Tool icon="pageLoop" label="Gaps between pages" active />
          <Tool icon="pageCover" label="Cover page" />
          <Tool icon="pageRtl" label="Right to left" />
          <Tool icon="pageThumbs" label="Page modes" />
        </PageGrid>
        <Tool icon="chevron" label="More layouts" w={13} h={118} />
        <Rule />
        <ViewGrid>
          <Tool icon="ruler" label="Rulers" />
          <Tool icon="snapLine" label="Snap to line" />
          <Tool icon="magnet" label="Snap" />
          <Tool icon="chevron" label="Snap menu" w={12} />
          <Tool icon="glasses" label="Read mode" />
          <Tool icon="gridEye" label="Grid" />
          <Tool icon="checker" label="Transparency grid" />
          <Tool icon="openPage" label="Page boxes" />
          <Blank />
          <Tool icon="moon" label="Dark mode" />
          <Tool icon="cross" label="Guides" />
          <Tool icon="xy" label="Coordinates" />
          <Tool icon="spacing" label="Page spacing" />
        </ViewGrid>
        <Rule />
        <Big icon="split" lines={["Split", ""]} w={55} menu />
      </GroupBody>
      <GroupName>Page Display</GroupName>
    </Group>

    <Group $w={58}>
      <GroupBody>
        <Big icon="windows" lines={["Window", ""]} w={51} boxed menu />
      </GroupBody>
    </Group>

    <Group $w={86}>
      <GroupBody>
        <Big icon="speaker" lines={["Read Out", "Loud"]} w={53} boxed menu />
      </GroupBody>
    </Group>
  </RibbonBar>
);

/* ---------- document tabs ---------- */

const DocTabs = styled.div`
  display: flex;
  align-items: stretch;
  flex: none;
  height: 35px;
  border-top: 1px solid #333;
  border-bottom: 2px solid #fbdfa2;
  background-color: #888;
  ${weave}
`;

const DocTab = styled.div`
  position: relative;
  display: flex;
  align-items: center;
  flex: none;
  width: 100px;
  padding: 0 0 2px 5px;
  border-radius: 3px 3px 0 0;
  background: #fce4b0;
  button {
    position: absolute;
    right: 4px;
    top: 4px;
    width: 8px;
    height: 8px;
  }
  &::after {
    content: "";
    position: absolute;
    left: 5px;
    right: 5px;
    bottom: 0;
    height: 2px;
    background: #a8966e;
  }
`;

const SquareButton = styled.button`
  display: flex;
  align-items: center;
  justify-content: center;
  flex: none;
  width: ${(p) => p.$w}px;
  margin: 2px 1px 2px 2px;
  padding: 0;
  border: 0;
  border-radius: 2px;
  background: #c8c8c8;
`;

/* ---------- side strip ---------- */

const Body = styled.main`
  display: flex;
  flex: 1;
  min-height: 0;
  background-color: #9c9c9c;
  ${weave}
`;

const Strip = styled.aside`
  display: flex;
  flex-direction: column;
  align-items: center;
  flex: none;
  width: 31px;
  border-right: 1px solid #aaa;
  background: #f3f3f3;
`;

const StripHead = styled.div`
  align-self: stretch;
  display: flex;
  flex-direction: column;
  align-items: flex-end;
  gap: 3px;
  flex: none;
  height: 23px;
  padding: 2px 1px 0;
  background: linear-gradient(#dcdcdc 11px, #f3f3f3 11px);
  &::after {
    content: "";
    align-self: stretch;
    height: 10px;
    margin: 0 2px;
    background: radial-gradient(#aaa 0.8px, transparent 1px) 0 0 / 3px 3px;
  }
`;

const StripItem = styled.span`
  position: relative;
  display: block;
  ${(p) =>
    p.$dot &&
    css`
      &::after {
        content: "";
        position: absolute;
        right: 0;
        bottom: 1px;
        width: 4px;
        height: 4px;
        border-radius: 50%;
        background: #5f9e2e;
      }
    `}
`;

const StripRule = styled.span`
  align-self: stretch;
  height: 1px;
  margin: 1px 2px;
  background: #bbb;
`;

const sideItems = [
  { icon: "bookmark", dot: true },
  { icon: "pages" },
  { icon: "note", active: true },
  { icon: "clip" },
  { icon: "fields" },
  { icon: "cert" },
  { icon: "layers", dot: true },
  { icon: "content" },
  { icon: "places" },
  { icon: "tree" },
  { icon: "link" },
];

const SideStrip = () => (
  <Strip>
    <StripHead>
      <Icon name="dock" />
    </StripHead>
    {sideItems.map((s) => (
      <StripItem key={s.icon} $dot={s.dot}>
        <Tool icon={s.icon} active={s.active} />
      </StripItem>
    ))}
    <StripRule />
    <Tool icon="tag" />
    <Tool icon="order" />
    <Tool icon="more" h={12} />
  </Strip>
);

/* ---------- comments panel ---------- */

const Panel = styled.section`
  display: flex;
  flex-direction: column;
  flex: none;
  width: 288px;
  padding: 0 2px;
  margin-left: 1px;
  border-radius: 3px 3px 0 0;
  background: #fff;
`;

const PanelHead = styled.div`
  display: flex;
  align-items: center;
  justify-content: space-between;
  flex: none;
  height: 25px;
  padding: 0 3px 0 3px;
  h2 {
    margin: 0;
    font-size: 12px;
    font-weight: 400;
  }
  button {
    align-self: flex-start;
  }
`;

const PanelTools = styled.div`
  display: flex;
  align-items: center;
  flex: none;
  height: 30px;
  padding-left: 1px;
  background: #f3f3f3;
`;

const PanelEnd = styled.span`
  display: flex;
  align-items: flex-end;
  justify-content: center;
  align-self: stretch;
  width: 11px;
  margin-left: auto;
  background: linear-gradient(#d8d8d8 20px, #f3f3f3 20px);
`;

const Find = styled.label`
  display: flex;
  align-items: center;
  gap: 3px;
  flex: none;
  height: 24px;
  padding: 0 1px;
  border: 1px solid #ddd;
  border-width: 1px 1px 2px;
  input {
    flex: 1;
    min-width: 0;
    padding: 0;
    border: 0;
    outline: 0;
  }
  input::placeholder {
    color: #777;
  }
`;

const ListArea = styled.div`
  display: flex;
  flex: 1;
  min-height: 0;
  border-top: 1px solid #ddd;
`;

const List = styled.div`
  display: flex;
  flex-direction: column;
  gap: 8px;
  flex: 1;
  min-width: 0;
  padding: 1px 5px 0 4px;
  overflow: hidden;
`;

const PageRow = styled.div`
  display: flex;
  align-items: center;
  flex: none;
  height: 28px;
  margin-bottom: -1px;
  svg + svg {
    margin-left: 8px;
  }
  b {
    margin: 0 3px 0 8px;
  }
  i {
    flex: 1;
    border-top: 1px dashed #777;
  }
`;

const Count = styled.span`
  margin-left: 3px;
  padding: 1px 1px;
  border: 1px solid #bbb;
  border-radius: 3px;
  font-weight: 700;
`;

const Card = styled.article`
  position: relative;
  flex: none;
  height: 77px;
  padding: 1px 3px 3px 2px;
  border: 1px solid #b3b3b3;
  border-radius: 3px;
  background: #f8f8f8;
`;

const CardHead = styled.header`
  display: flex;
  align-items: center;
  height: 21px;
  white-space: nowrap;
  time {
    margin-left: auto;
    font-size: 11px;
  }
`;

const KindIcon = styled.span`
  display: flex;
  justify-content: center;
  width: 16px;
  margin-right: 5px;
`;

const CardBody = styled.div`
  margin-left: 1px;
  padding-left: 5px;
  border-left: 3px solid ${(p) => (p.$green ? "#7cb342" : "#d8d08a")};
`;

const CommentInput = styled.input`
  display: block;
  width: 100%;
  height: 23px;
  padding: 0 3px;
  border: 1px solid #e0e0e0;
  border-radius: 3px;
  background: transparent;
  outline: 0;
  &::placeholder {
    color: #8a8a8a;
  }
`;

const CardActions = styled.div`
  display: flex;
  align-items: center;
  gap: 5px;
  height: 29px;
`;

const Check = styled.input`
  appearance: none;
  width: 18px;
  height: 18px;
  border: 1px solid #333;
  border-radius: 3px;
  background: #fff;
`;

const ReplyButton = styled.button`
  width: 38px;
  height: 23px;
  margin-left: auto;
  padding: 0;
  border: 1px solid #b8b8b8;
  border-radius: 3px;
  background: #fbfbfb;
`;

const Highlight = styled.span`
  position: absolute;
  right: 6px;
  bottom: -9px;
  width: 44px;
  height: 8px;
  background: #fcf0c4;
`;

const comments = [
  { kind: "sticky", title: "Sticky Note", time: "27/03/2025, 13:30:00" },
  { kind: "sticky", title: "Sticky Note", time: "27/03/2025, 13:30:01" },
  { kind: "sticky", title: "Sticky Note", time: "27/03/2025, 13:30:02", marked: true },
  { kind: "underline", title: "Underline", time: "27/03/2025, 13:30:04" },
];

const Comment = ({ item }) => (
  <Card>
    <CardHead>
      <KindIcon>
        <Icon name={item.kind} />
      </KindIcon>
      <span>
        <b>{item.title}</b> - [SeanG]
      </span>
      <time>{item.time}</time>
    </CardHead>
    <CardBody $green={item.kind === "underline"}>
      <CommentInput aria-label={`${item.title} text`} placeholder="Enter text..." />
      <CardActions>
        <ToolButton $w={8} $h={20} aria-label="Options">
          <Icon name="dots" />
        </ToolButton>
        <Rule $m="4px 1px 4px -1px" />
        <Check type="checkbox" aria-label="Mark comment" />
        <ToolButton $w={18} $h={18} aria-label="Lock">
          <Icon name="lock" />
        </ToolButton>
        <ReplyButton>Reply</ReplyButton>
      </CardActions>
    </CardBody>
    {item.marked && <Highlight />}
  </Card>
);

const Scroll = styled.div`
  display: flex;
  flex-direction: column;
  align-items: center;
  flex: none;
  width: 14px;
  padding: 2px 0 4px;
  background: #f0f0f0;
`;

const Track = styled.span`
  flex: 1;
  width: 5px;
  margin: 3px 0;
`;

const Thumb = styled.span`
  display: block;
  height: ${(p) => p.$h};
  border-radius: 3px;
  background: #868686;
`;

const ScrollBar = ({ thumb }) => (
  <Scroll>
    <Icon name="scrollUp" />
    <Track>
      <Thumb $h={thumb} />
    </Track>
    <Icon name="scrollDown" />
  </Scroll>
);

const Status = styled.footer`
  flex: none;
  height: 17px;
  padding-left: 4px;
  line-height: 17px;
  i {
    display: inline-block;
    width: 5px;
    height: 5px;
    margin: 0 4px 1px;
    border-radius: 50%;
    background: #888;
  }
`;

const Comments = () => (
  <Panel>
    <PanelHead>
      <h2>Comments</h2>
      <Tool icon="closeSmall" label="Close panel" w={9} h={18} />
    </PanelHead>
    <PanelTools>
      <Grip>
        <Icon name="dock" />
      </Grip>
      <Tool icon="gears" label="Options" />
      <Tool icon="chevron" label="Options menu" w={14} />
      <Rule $m="2px 1px" />
      <Tool icon="noteExpand" label="Expand all" />
      <Tool icon="noteCollapse" label="Collapse all" />
      <Rule $m="2px 1px" />
      <Tool icon="notePrev" label="Previous comment" faded />
      <Tool icon="noteNext" label="Next comment" faded />
      <Rule $m="2px 1px" />
      <Tool icon="trash" label="Delete" faded />
      <Rule $m="2px 1px" />
      <Tool icon="noteView" label="Show comments" />
      <Tool icon="chevron" label="Show menu" w={12} />
      <Rule $m="2px 1px" />
      <Tool icon="more" label="More" w={14} />
      <PanelEnd>
        <Icon name="collapse" />
      </PanelEnd>
    </PanelTools>
    <Find>
      <Icon name="search" />
      <input aria-label="Find" placeholder="Find..." />
    </Find>
    <ListArea>
      <List>
        <PageRow>
          <Icon name="chevronBig" />
          <Icon name="pageSingle" />
          <b>Page 3</b>
          <i />
          <Count>5</Count>
        </PageRow>
        {comments.map((c) => (
          <Comment key={c.time} item={c} />
        ))}
      </List>
      <ScrollBar thumb="70%" />
    </ListArea>
    <Status>
      <b>5</b> items<i />
      <b>1</b> items selected
    </Status>
  </Panel>
);

/* ---------- document ---------- */

const Splitter = styled.div`
  display: flex;
  align-items: center;
  flex: none;
  width: 11px;
  button {
    width: 9px;
    height: 60px;
    margin: 0 1px;
    border-color: #888;
    border-radius: 4px;
    background: #dcdcdc;
  }
`;

const Doc = styled.section`
  display: flex;
  flex-direction: column;
  flex: 1;
  min-width: 0;
  margin-top: 1px;
  border: solid #fbdfa2;
  border-width: 2px 0 0 2px;
`;

const DocView = styled.div`
  display: flex;
  flex: 1;
  min-height: 0;
`;

const Canvas = styled.div`
  display: flex;
  flex: 1;
  min-width: 0;
  overflow: hidden;
  padding: 5px 45px 0 44px;
  background-color: #a9a9a9;
  ${weave}
  box-shadow: inset 0 2px 6px #444, inset 1px 0 2px #444;
`;

const Sheet = styled.div`
  flex: 1;
  min-width: 0;
  background: #fff;
  box-shadow: 0 0 0 1px #333, 0 0 10px 1px rgba(0, 0, 0, 0.6);
  svg {
    display: block;
    width: 100%;
    height: 100%;
  }
`;

const CX = 770.5;
const CY = 539.5;

// fixed seed, so that the concrete speckles stay put between renders
const makeSpeckles = () => {
  let seed = 7;
  const rnd = () => {
    seed = (seed * 16807) % 2147483647;
    return seed / 2147483647;
  };
  const out = [];
  for (let i = 0; i < 1250; i++) {
    const a = Math.PI / 2 + rnd() * (Math.PI / 2 + 0.14);
    const rx = 288 + rnd() * 10;
    const x = CX + Math.cos(a) * rx;
    const y = CY - Math.sin(a) * (rx + 4.5);
    const s = rnd() < 0.3 ? 1.5 : 0.9;
    out.push(`M${x.toFixed(1)} ${y.toFixed(1)}h${s}v${s}h${-s}z`);
  }
  return out.join("");
};
const speckles = makeSpeckles();

const arc = (rx, ry, x0, y0, x1, y1) => `M${x0} ${y0}A${rx} ${ry} 0 0 1 ${x1} ${y1}`;

const Plan = () => (
  <svg viewBox="378 205 452 375" preserveAspectRatio="xMinYMin slice" aria-label="Floor plan">
    <g fill="none" stroke="#111">
      <path d={arc(299, 303, 474, 580, 770.5, 236.5)} strokeWidth="1.100" />
      <path d={arc(287, 292, 486, 580, 770.5, 247.500)} strokeWidth="1.700" />
      <path d={arc(282, 286, 509, 433, 770.5, 253.500)} strokeWidth="1.100" />
      <path d={arc(258, 263, 516.500, 580, 770.5, 276.500)} strokeWidth="1.300" />
      <path d="M770.500 236.200q20 .300 40 2.500M770.500 246.700q22 .500 45 3.500" />
      <path d="M469.500 580Q460 497 484.500 429.500l9 2.500Q465 497 473 580" />
      <path d="M613.500 246v334M610 246.500h160" />
      <path d="M770.500 226v58" strokeWidth="1.200" />
      <path d="M770.500 290v290" strokeWidth="1.200" strokeDasharray="9 5 21 5" />
      <path d="M490 433h281" strokeWidth="2" />
      <path d="M494 449.500h277M471 539.500h300" />
      <path d="M468 396.500h13l19 34M439 420.500h24v12M459 433.500h20M433 507.500l32 7" />
      <path d="M505 436l26 10M538 379l19 17.500h10M674 412.500h-5l-4 20M605 420q0 10 7 13M674 574.500h-5l-1 6" />
      <path d="M494 437v12M494 437h7v12h-7M494 443h7M504 433v17M505 436l3 13" strokeWidth="1.800" />
      <path d="M474 543l8-13 6-1" />
    </g>
    <path d={speckles} fill="#111" />
    <path
      d="M463 434l-2-4h4zM466 515l-4-3v3zM532 447l-5 0 2-4zM536 377l4 1-2 3zM665 433l-1-5h4zM613.500 434l-5-2 4-2zM611 244l5 5M768 280l6-6M610 452l7-5M768 543l6-6M470 543l6-6"
      fill="#111"
      stroke="#111"
    />
    <g fontFamily="Liberation Sans, Arial, sans-serif" fill="#222">
      <g fontSize="7">
        <text x="683.500" y="359">BEDROOMS</text>
        <text x="683.500" y="501">LIVING ROOM</text>
      </g>
      <g fontSize="4">
        <text x="412" y="398">1 3/4"x11 7/8" SCL 'CURVED'</text>
        <text x="412" y="403">LEDGER. C/W ANCHOR</text>
        <text x="412" y="407">BOLTS CAST INTO CONC</text>
        <text x="412" y="412">CORBEL</text>
        <text x="412" y="422">POUR JOINT</text>
        <text x="404" y="509">FORM SET #2</text>
        <text x="568.500" y="398">FORM SET #3</text>
        <text x="676.500" y="414">5/8" OR 3/4" PLYWOOD</text>
        <text x="676.500" y="419">SHEATHING ON 11 7/8" MANUF</text>
        <text x="676.500" y="423">JOISTS @ 16" O/C MAX</text>
        <text x="676.500" y="576">5/8" OR 3/4" PLYWOOD</text>
        <text x="676.500" y="580">SHEATHING ON 11 7/8" MANUF</text>
        <text x="617.500" y="536">18' - 0"  RADIUS</text>
        <text transform="translate(620 323) rotate(-38)">22' - 5 3/4"</text>
        <text transform="translate(611 358) rotate(-90)">11' - 7 5/8"</text>
        <text transform="translate(606.500 418) rotate(-90)">5/8"</text>
        <text transform="translate(611 447) rotate(-90)">11 7/8"</text>
        <text transform="translate(611 530) rotate(-90)">9' - 5 3/4"</text>
        <text transform="translate(511.500 517) rotate(-86)">10' - 0"</text>
        <text x="484" y="531">8"</text>
      </g>
    </g>
  </svg>
);

const NavBar = styled.div`
  display: flex;
  align-items: center;
  flex: none;
  height: 32px;
  padding-left: 2px;
  border-top: 1px solid #bbb;
  background: #f3f3f3;
`;

const PageInput = styled.input`
  flex: none;
  width: 96px;
  height: 23px;
  margin: 0 1px;
  padding: 0 3px;
  border: 1px solid #adadad;
  border-radius: 2px;
  background: #fff;
  font-size: 13px;
  text-align: right;
`;

const NavGap = styled.span`
  flex: none;
  width: ${(p) => p.$w}px;
`;

const GripDock = () => (
  <Grip>
    <Icon name="dock" />
  </Grip>
);

const CornerIcon = styled.span`
  align-self: flex-start;
  margin: 0 3px 0 auto;
`;

const NavTools = () => (
  <NavBar>
    <GripDock />
    <NavGap $w={10} />
    <Tool icon="more" label="More" w={14} />
    <NavGap $w={17} />
    <GripDock />
    <NavGap $w={2} />
    <Tool icon="first" label="First page" faded />
    <Tool icon="prev" label="Previous page" faded />
    <PageInput aria-label="Page" defaultValue="1/4" />
    <Tool icon="next" label="Next page" />
    <Tool icon="last" label="Last page" />
    <NavGap $w={2} />
    <Rule $m="2px 0" />
    <Tool icon="more" label="More navigation" w={14} />
    <GripDock />
    <Tool icon="pageSingle" label="Single page" active />
    <Tool icon="pageCont" label="Continuous" />
    <Tool icon="more" label="More layouts" w={13} />
    <GripDock />
    <NavGap $w={2} />
    <ZoomSelect w={82} label="Zoom" />
    <NavGap $w={2} />
    <Rule $m="2px 0" />
    <Tool icon="zoomOut" label="Zoom out" w={30} />
    <Tool icon="more" label="More zoom" w={12} />
    <GripDock />
    <NavGap $w={10} />
    <Tool icon="more" label="More tools" w={16} />
    <CornerIcon>
      <Icon name="expand" />
    </CornerIcon>
  </NavBar>
);

const App = () => {
  return (
    <>
      <GlobalStyle />
      <Window>
        <Title />
        <Tabs />
        <Ribbon />
        <DocTabs>
          <DocTab>
            Architecture *
            <Tool icon="closeSmall" label="Close tab" w={8} h={8} />
          </DocTab>
          <SquareButton $w={27} aria-label="New tab">
            <Icon name="plus" />
          </SquareButton>
          <Spacer />
          <SquareButton $w={30} aria-label="Close all">
            <Icon name="close" />
          </SquareButton>
        </DocTabs>
        <Body>
          <SideStrip />
          <Comments />
          <Splitter>
            <Tool icon="chevronLeft" label="Hide panel" />
          </Splitter>
          <Doc>
            <DocView>
              <Canvas>
                <Sheet>
                  <Plan />
                </Sheet>
              </Canvas>
              <ScrollBar thumb="14%" />
            </DocView>
            <NavTools />
          </Doc>
        </Body>
      </Window>
    </>
  );
};

export default App;
